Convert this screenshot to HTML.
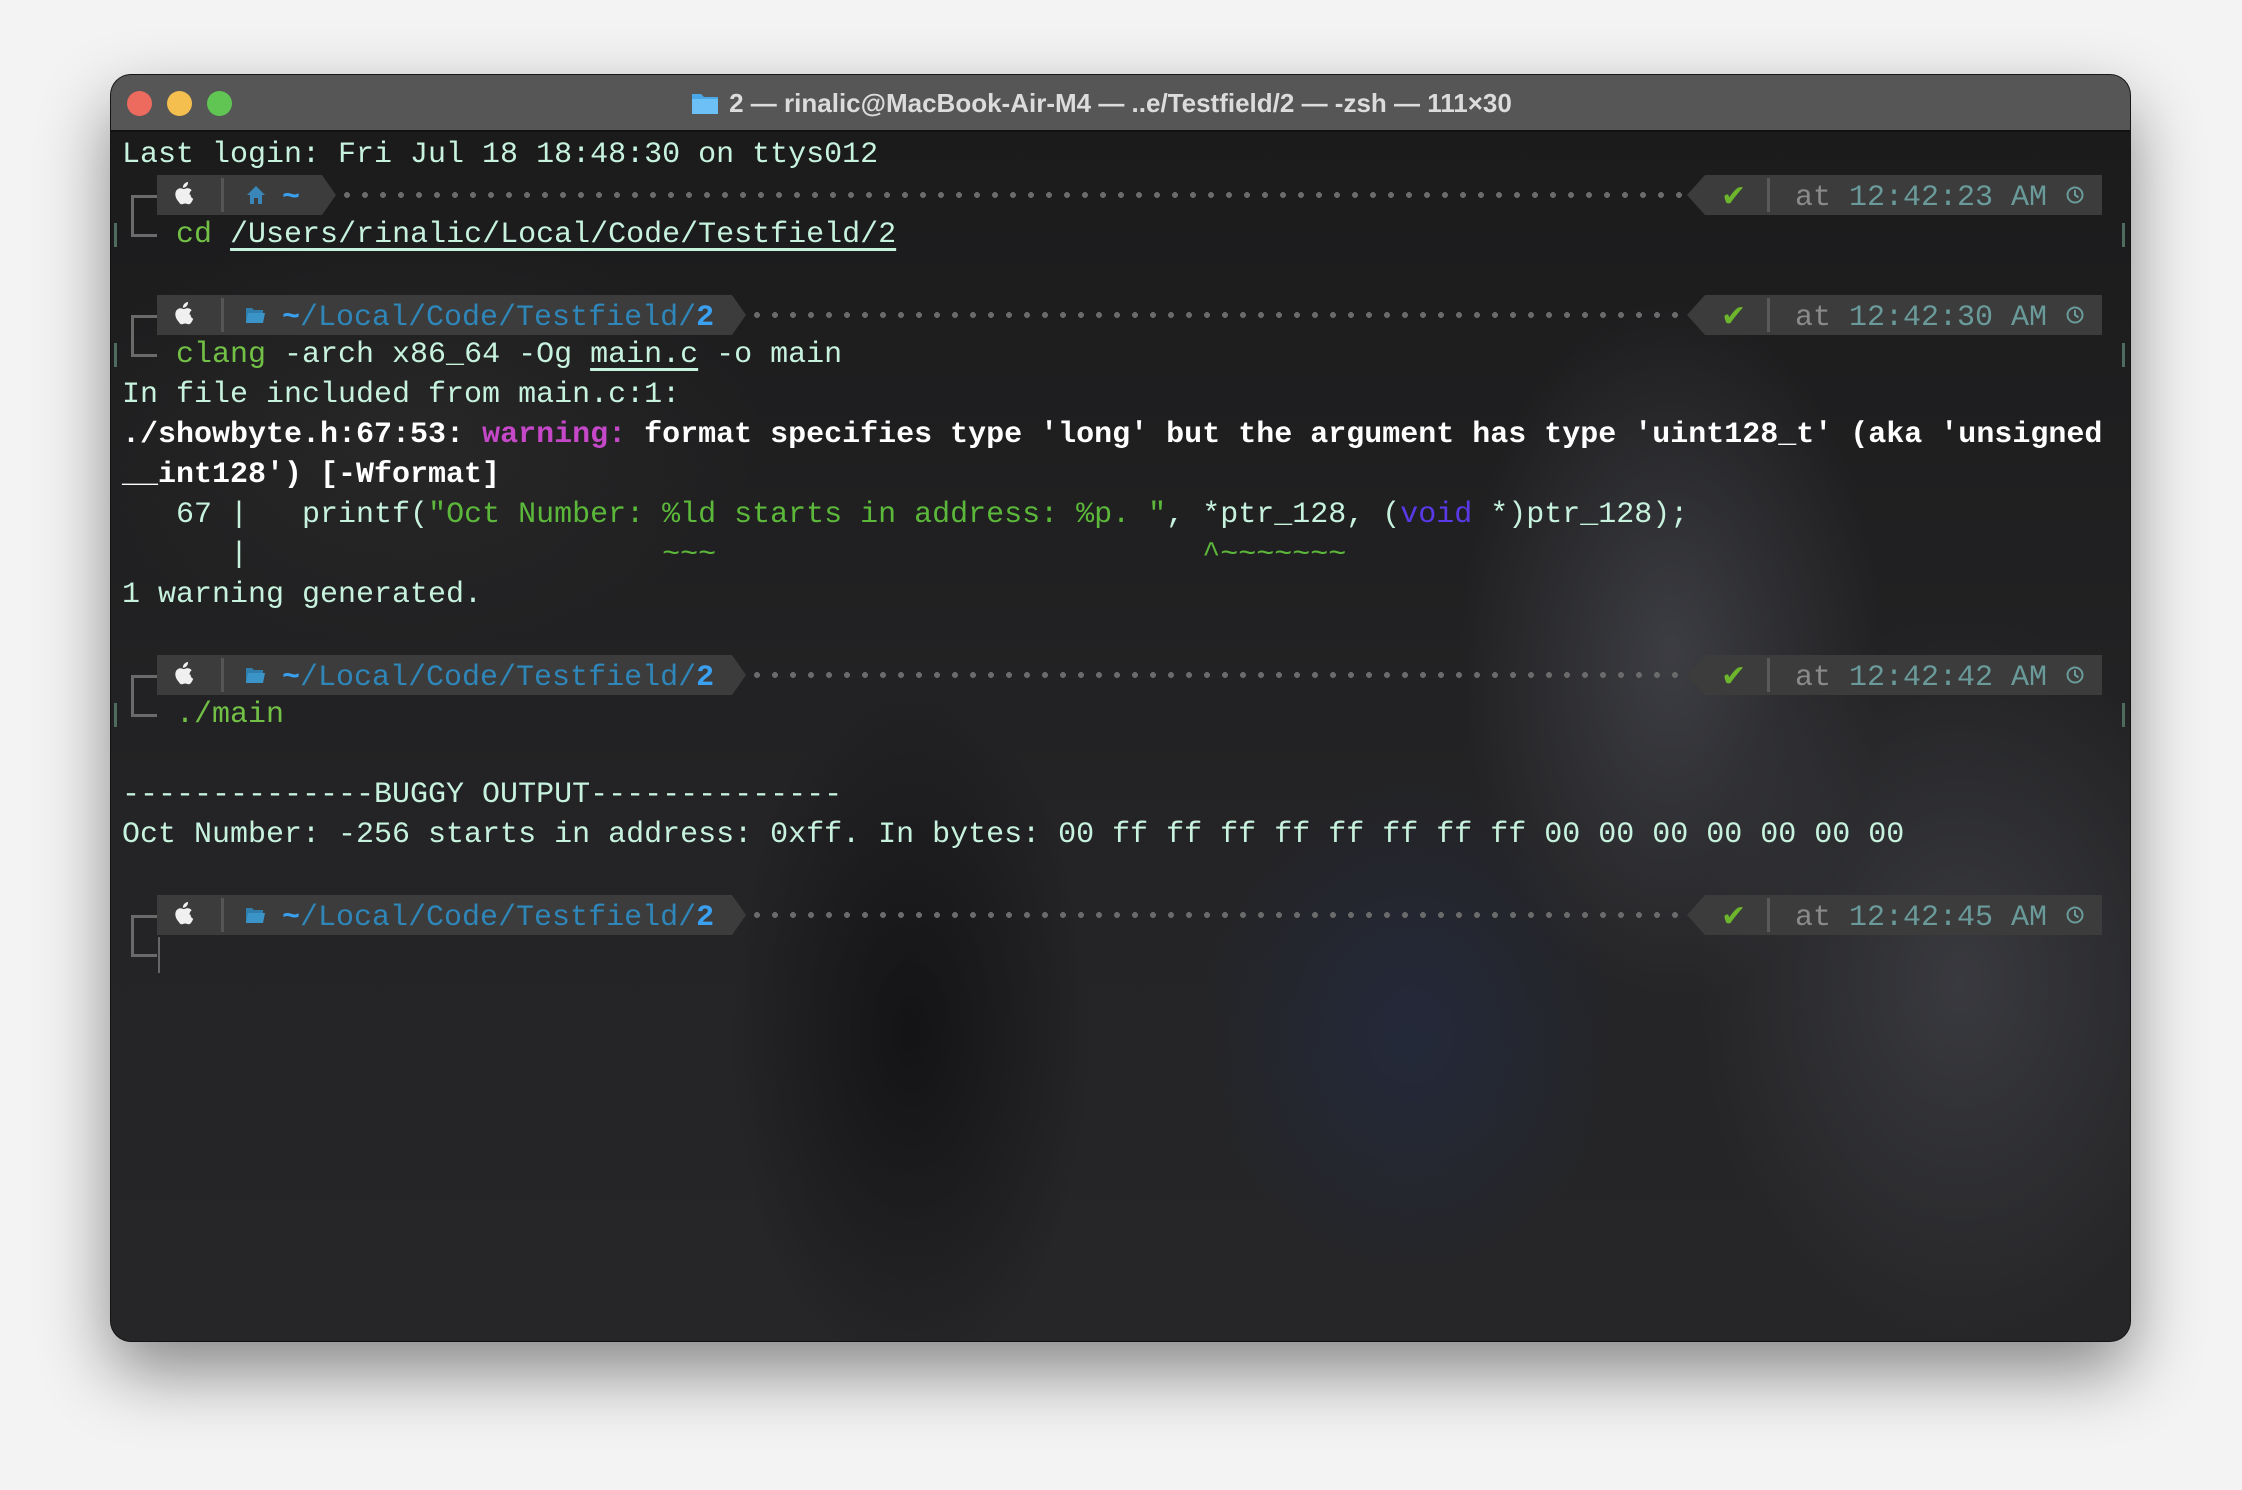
<!DOCTYPE html>
<html><head><meta charset="utf-8">
<style>
*{margin:0;padding:0;box-sizing:border-box}
html,body{width:2242px;height:1490px;background:#f3f3f3;overflow:hidden}
#win{position:absolute;left:111px;top:75px;width:2019px;height:1266px;border-radius:20px;overflow:hidden;background:#1d1d1f;box-shadow:0 30px 70px rgba(0,0,0,.45),0 0 0 1px #1a1a1a}
#title{position:absolute;left:0;top:0;width:100%;height:57px;background:#565656;border-bottom:2px solid #111;font:600 26px "Liberation Sans",sans-serif;color:#dcdcdc;text-align:center;line-height:56px}
.tl{position:absolute;top:16px;width:25px;height:25px;border-radius:50%}
#bg{position:absolute;left:0;top:57px;width:100%;height:1209px;
background:
radial-gradient(ellipse 300px 500px at 1560px 520px,rgba(110,112,125,.35),transparent 70%),
radial-gradient(ellipse 380px 520px at 1850px 850px,rgba(95,97,108,.35),transparent 70%),
radial-gradient(ellipse 300px 360px at 1300px 900px,rgba(35,45,75,.55),transparent 70%),
radial-gradient(ellipse 260px 500px at 800px 900px,rgba(8,8,10,.6),transparent 70%),
radial-gradient(ellipse 500px 300px at 300px 300px,rgba(60,58,55,.3),transparent 70%),
linear-gradient(180deg,#1b1b1c,#242426 60%,#262628)}
.r{position:absolute;left:11px;height:40px;line-height:40px;font:30px "Liberation Mono",monospace;color:#c6f2de;white-space:pre}
.b{font-weight:bold;color:#fff}
.g{color:#72c046}
.u{text-decoration:underline;text-decoration-thickness:3px;text-underline-offset:6px}
</style></head><body>
<div id="win">
<div id="bg"></div>
<div id="title">
<div class="tl" style="left:16px;background:#ed6a5e"></div>
<div class="tl" style="left:56px;background:#f5bf4f"></div>
<div class="tl" style="left:96px;background:#61c554"></div>
<svg style="position:absolute;left:580px;top:16px" width="28" height="24" viewBox="0 0 28 24"><path d="M1 3h9l3 3h14v17H1z" fill="#4aa8e8"/><path d="M1 8h26v15H1z" fill="#6cc0f5"/></svg>
<span style="position:relative;left:0px">2 — rinalic@MacBook-Air-M4 — ..e/Testfield/2 — -zsh — 111×30</span>
</div>
</div>
<script>
const W=document.getElementById('win');
const top0=60,lh=40;
function row(i,html){const d=document.createElement('div');d.className='r';d.style.top=(top0+3+i*lh)+'px';d.innerHTML=html;W.appendChild(d);}
function el(tag,css,html){const d=document.createElement(tag||'div');d.style.cssText=css;if(html)d.innerHTML=html;W.appendChild(d);return d;}
const apple='<svg width="20" height="24" viewBox="0 0 20 24"><path d="M14 0c.2 1.6-.5 3.2-1.5 4.2-1 1-2.4 1.6-3.6 1.5-.2-1.5.5-3 1.5-4C11.4.8 12.8.1 14 0zM16.6 12.8c0 3 2.6 4 2.6 4-.1.2-.4 1.5-1.4 2.9-.9 1.3-1.800 2.6-3.2 2.6-1.4 0-1.8-.8-3.4-.8s-2.1.8-3.4.8c-1.4.1-2.4-1.4-3.3-2.7C1.7 16.8.3 12 2.2 8.8c.9-1.6 2.6-2.6 4.4-2.6 1.3 0 2.6.9 3.4.9.8 0 2.3-1.1 3.9-.9.7 0 2.6.3 3.8 2.1-.1.1-2.3 1.3-2.1 4.5z" fill="#f0f0f0"/></svg>';
const home='<svg width="20" height="20" viewBox="0 0 20 20"><path d="M10 1 1 10h3v9h4v-6h4v6h4v-9h3z" fill="#3a86b8"/></svg>';
const folder='<svg width="20" height="18" viewBox="0 0 20 18"><path d="M1 2h6l2 2h9v13H1z" fill="#2f7fae"/><path d="M3 7h17l-2 10H1z" fill="#3a94c8"/></svg>';
const clock='<svg width="18" height="18" viewBox="0 0 18 18"><circle cx="9" cy="9" r="7.5" fill="none" stroke="#6a9a9a" stroke-width="2"/><path d="M9 4v5l3.5 2.5" fill="none" stroke="#6a9a9a" stroke-width="2"/></svg>';
function prompt(i,home_,time){
  const y=top0+i*lh;
  el('div',`position:absolute;left:20px;top:${y+20}px;width:26px;height:40px;border-left:3px solid #6a6a6a;border-top:3px solid #6a6a6a`);
  el('div',`position:absolute;left:20px;top:${y+40}px;width:26px;height:22px;border-left:3px solid #6a6a6a;border-bottom:3px solid #6a6a6a`);
  const segEnd = home_?211:621;
  el('div',`position:absolute;left:46px;top:${y}px;width:${segEnd-46}px;height:40px;background:#3c3c3c`);
  el('div',`position:absolute;left:${segEnd}px;top:${y}px;width:0;height:0;border-top:20px solid transparent;border-bottom:20px solid transparent;border-left:14px solid #3c3c3c`);
  el('div',`position:absolute;left:63px;top:${y+7}px;line-height:0`,apple);
  el('div',`position:absolute;left:110px;top:${y+3}px;width:3px;height:34px;background:#555`);
  if(home_){
    el('div',`position:absolute;left:135px;top:${y+10}px;line-height:0`,home);
    el('span',`position:absolute;left:171px;top:${y+3}px;font:bold 30px 'Liberation Mono',monospace;line-height:40px;color:#3aa0f0`,'~');
  }else{
    el('div',`position:absolute;left:134px;top:${y+11}px;line-height:0`,folder);
    el('span',`position:absolute;left:171px;top:${y+3}px;font:30px 'Liberation Mono',monospace;line-height:40px;color:#2f86b8;white-space:pre`,'<b style="color:#3aa0f0">~</b>/Local/Code/Testfield/<b style="color:#3aa0f0">2</b>');
  }
  const dStart=segEnd+16, dEnd=1574;
  el('div',`position:absolute;left:${dStart}px;top:${y}px;width:${dEnd-dStart}px;height:40px;background:radial-gradient(circle 3px at 9px 20px,#6a6a6a 98%,transparent) repeat-x;background-size:18px 40px`);
  el('div',`position:absolute;left:1576px;top:${y}px;width:0;height:0;border-top:20px solid transparent;border-bottom:20px solid transparent;border-right:18px solid #3c3c3c`);
  el('div',`position:absolute;left:1594px;top:${y}px;width:397px;height:40px;background:#3c3c3c`);
  el('span',`position:absolute;left:1610px;top:${y+2}px;font:bold 30px 'DejaVu Sans',sans-serif;line-height:40px;color:#6cb52d`,'✔');
  el('div',`position:absolute;left:1656px;top:${y+3}px;width:3px;height:34px;background:#5a5a5a`);
  el('span',`position:absolute;left:1684px;top:${y+3}px;font:30px 'Liberation Mono',monospace;line-height:40px;color:#8a8a8a;white-space:pre`,'at <span style="color:#6a9a9a">'+time+'</span>');
  el('div',`position:absolute;left:1955px;top:${y+11}px;line-height:0`,clock);
}
function marks(i){const y=top0+i*lh+8;el('div',`position:absolute;left:3px;top:${y}px;width:3px;height:24px;background:#4f6a5e`);el('div',`position:absolute;left:2011px;top:${y}px;width:3px;height:24px;background:#4f6a5e`);}
row(0,'Last login: Fri Jul 18 18:48:30 on ttys012');
prompt(1,true,'12:42:23 AM');
row(2,'   <span class="g">cd</span> <span class="u">/Users/rinalic/Local/Code/Testfield/2</span>');marks(2);
prompt(4,false,'12:42:30 AM');
row(5,'   <span class="g">clang</span> -arch x86_64 -Og <span class="u">main.c</span> -o main');marks(5);
row(6,'In file included from main.c:1:');
row(7,'<span class="b">./showbyte.h:67:53: <span style="color:#c548c8">warning:</span> format specifies type \'long\' but the argument has type \'uint128_t\' (aka \'unsigned</span>');
row(8,'<span class="b">__int128\') [-Wformat]</span>');
row(9,'   67 |   printf(<span style="color:#5cb83a">"Oct Number: %ld starts in address: %p. "</span>, *ptr_128, (<span style="color:#5a3ae8">void</span> *)ptr_128);');
row(10,'      |                       <span style="color:#5cb83a">~~~</span>                           <span style="color:#5cb83a">^~~~~~~~</span>');
row(11,'1 warning generated.');
prompt(13,false,'12:42:42 AM');
row(14,'   <span class="g">./main</span>');marks(14);
row(16,'--------------BUGGY OUTPUT--------------');
row(17,'Oct Number: -256 starts in address: 0xff. In bytes: 00 ff ff ff ff ff ff ff ff 00 00 00 00 00 00 00');
prompt(19,false,'12:42:45 AM');
el('div',`position:absolute;left:47px;top:${top0+20*lh+2}px;width:2px;height:36px;background:#666`);
</script>
</body></html>
